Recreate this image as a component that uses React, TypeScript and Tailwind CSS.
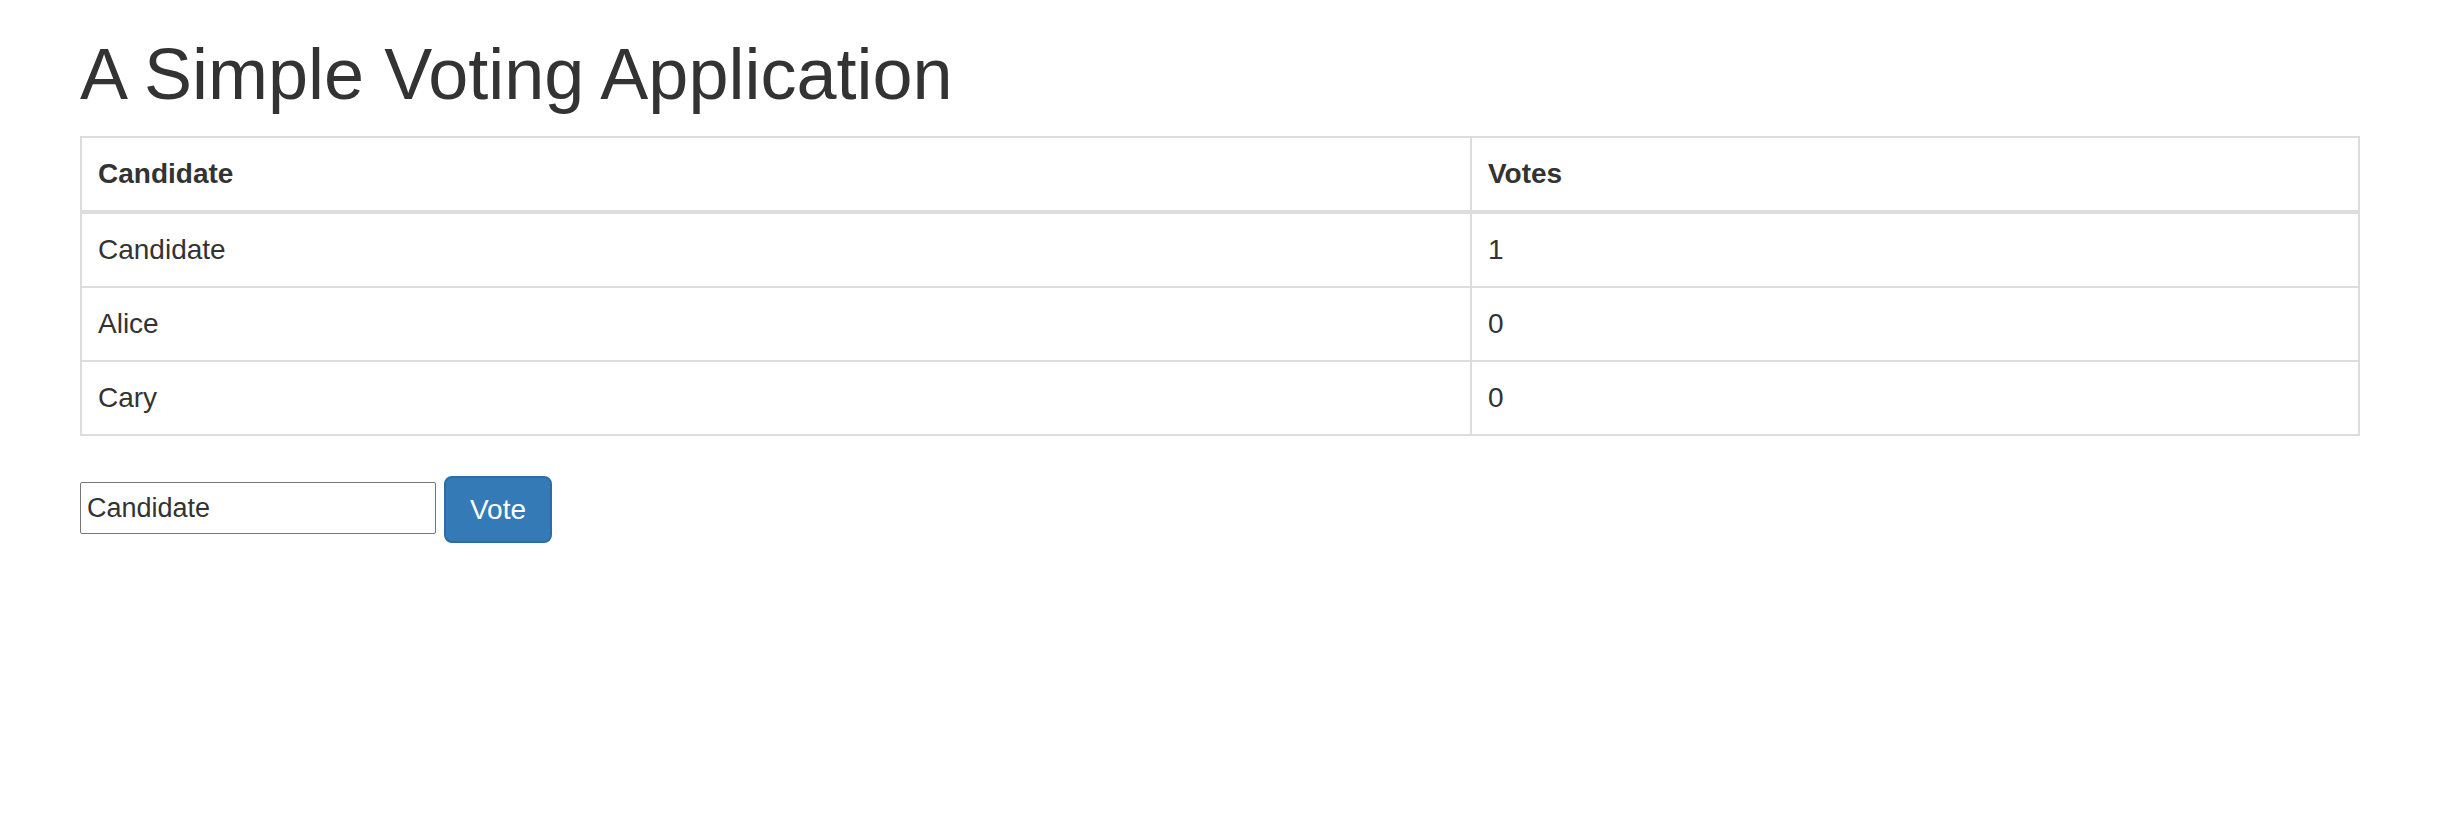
import { useState } from 'react';

type Row = { name: string; votes: number };

const initialRows: Row[] = [
  { name: 'Candidate', votes: 1 },
  { name: 'Alice', votes: 0 },
  { name: 'Cary', votes: 0 },
];

export default function App() {
  const [rows, setRows] = useState<Row[]>(initialRows);
  const [name, setName] = useState('Candidate');

  const vote = () => {
    setRows((prev) =>
      prev.map((r) => (r.name === name ? { ...r, votes: r.votes + 1 } : r))
    );
  };

  return (
    <main className="min-h-screen bg-white px-[80px] font-['Liberation_Sans',Arial,sans-serif] text-[#333]">
      {/* Title */}
      <h1 className="mt-[35px] mb-[22px] text-[72px] leading-[79px] font-normal">
        A Simple Voting Application
      </h1>

      {/* Results table */}
      <table className="w-[2280px] border-separate border-spacing-0 text-[28px] leading-[40px]">
        <thead>
          <tr>
            <th className="w-[1392px] border-t-2 border-r-2 border-b-4 border-l-2 border-[#ddd] p-4 text-left font-bold">
              Candidate
            </th>
            <th className="border-t-2 border-r-2 border-b-4 border-[#ddd] p-4 text-left font-bold">
              Votes
            </th>
          </tr>
        </thead>
        <tbody>
          {rows.map((r) => (
            <tr key={r.name}>
              <td className="border-r-2 border-b-2 border-l-2 border-[#ddd] p-4">
                {r.name}
              </td>
              <td className="border-r-2 border-b-2 border-[#ddd] p-4">
                {r.votes}
              </td>
            </tr>
          ))}
        </tbody>
      </table>

      {/* Vote form */}
      <div className="mt-[40px] flex items-start gap-[8px]">
        <input
          value={name}
          onChange={(e) => setName(e.target.value)}
          className="mt-[6px] h-[52px] w-[356px] rounded-[2px] border border-[#767676] bg-white pl-[6px] text-[27px] text-[#333] outline-none"
        />
        <button
          onClick={vote}
          className="h-[67px] w-[108px] rounded-[8px] border-2 border-[#2e6da4] bg-[#337ab7] text-[28px] leading-[40px] text-white"
        >
          Vote
        </button>
      </div>
    </main>
  );
}
